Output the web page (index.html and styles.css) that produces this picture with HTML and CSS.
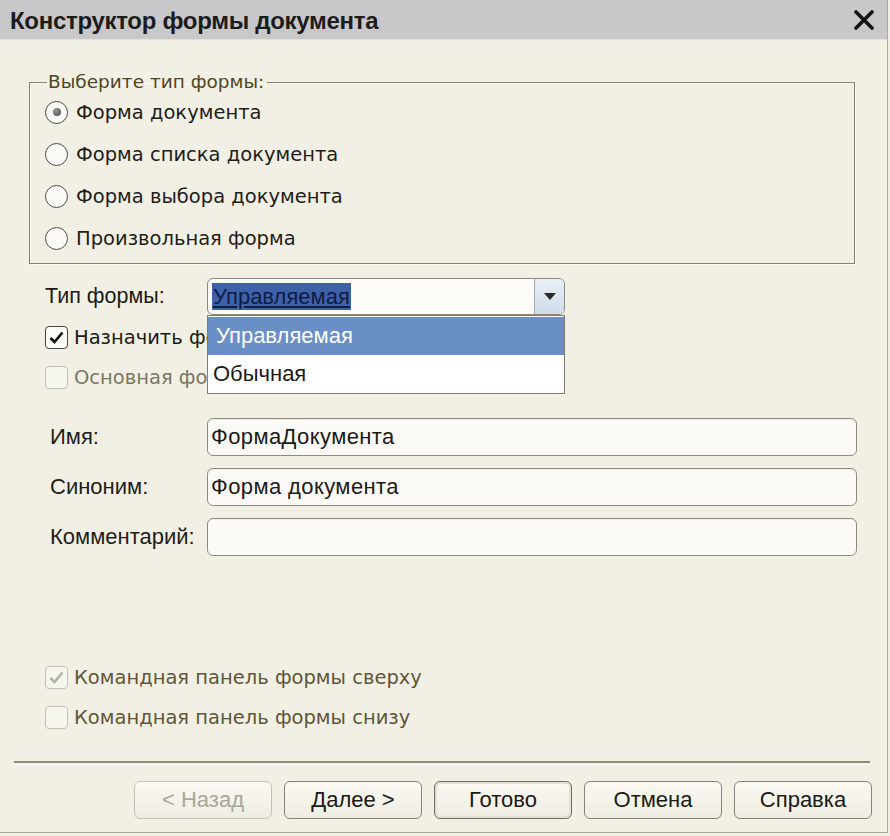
FILE: index.html
```html
<!DOCTYPE html>
<html lang="ru">
<head>
<meta charset="utf-8">
<title>Конструктор формы документа</title>
<link rel="stylesheet" href="styles.css">
</head>
<body>
<div class="window">
  <div class="titlebar">
    <span class="title">Конструктор формы документа</span>
    <svg class="close" width="20" height="20" viewBox="0 0 20 20"><path d="M2 2 L18 18 M18 2 L2 18" stroke="#111" stroke-width="3.6" stroke-linecap="round"/></svg>
  </div>
  <div class="content">
    <fieldset class="group">
      <legend>Выберите тип формы:</legend>
      <div class="radio-row first"><span class="radio checked"></span><span class="rlabel">Форма документа</span></div>
      <div class="radio-row"><span class="radio"></span><span class="rlabel">Форма списка документа</span></div>
      <div class="radio-row"><span class="radio"></span><span class="rlabel">Форма выбора документа</span></div>
      <div class="radio-row"><span class="radio"></span><span class="rlabel">Произвольная форма</span></div>
    </fieldset>

    <div class="type-row">
      <span class="type-label">Тип формы:</span>
      <div class="combo">
        <div class="combo-field"><span class="sel">Управляемая</span></div>
        <div class="combo-btn"><svg width="12" height="7" viewBox="0 0 12 7"><path d="M0 0 H12 L6 7 Z" fill="#2b2a25"/></svg></div>
        <div class="combo-list">
          <div class="opt active">Управляемая</div>
          <div class="opt">Обычная</div>
        </div>
      </div>
    </div>

    <div class="check-row"><span class="check on"><svg width="15" height="13" viewBox="0 0 15 13"><path d="M1.5 7 L5.5 11 L13.5 1.5" fill="none" stroke="#111" stroke-width="2.6"/></svg></span><span class="clabel clip">Назначить форму основной</span></div>
    <div class="check-row disabled"><span class="check"></span><span class="clabel clip">Основная форма документа</span></div>

    <div class="fields">
      <span class="flabel">Имя:</span><div class="input">ФормаДокумента</div>
      <span class="flabel">Синоним:</span><div class="input">Форма документа</div>
      <span class="flabel">Комментарий:</span><div class="input"></div>
    </div>

    <div class="bottom-checks">
      <div class="check-row muted"><span class="check dim"><svg width="15" height="13" viewBox="0 0 15 13"><path d="M1.5 7 L5.5 11 L13.5 1.5" fill="none" stroke="#b4b3ab" stroke-width="2.6"/></svg></span><span class="clabel">Командная панель формы сверху</span></div>
      <div class="check-row muted"><span class="check dim"></span><span class="clabel">Командная панель формы снизу</span></div>
    </div>
  </div>
  <div class="separator"></div>
  <div class="buttons">
    <div class="btn disabled">&lt; Назад</div>
    <div class="btn">Далее &gt;</div>
    <div class="btn default">Готово</div>
    <div class="btn">Отмена</div>
    <div class="btn">Справка</div>
  </div>
</div>
</body>
</html>
```

FILE: styles.css
```css
html, body {
  margin: 0;
  padding: 0;
  background: #f2f0e4;
}
body {
  font-family: "Liberation Sans", Arial, sans-serif;
  color: #1b1a16;
}
.window {
  width: 887px;
  height: 832px;
  background: #f2f0e4;
  border-right: 1px solid #a9a8a2;
  border-bottom: 1px solid #a9a8a2;
  display: flex;
  flex-direction: column;
  overflow: hidden;
}
.titlebar {
  height: 40px;
  flex: none;
  background: #c8c7c9;
  border-bottom: 1px solid #e2e1dc;
  box-sizing: border-box;
  display: flex;
  align-items: center;
  justify-content: space-between;
  padding: 0 13px 0 10px;
}
.title {
  font-weight: bold;
  font-size: 24px;
  color: #1c1c1c;
  letter-spacing: -0.3px;
  margin-top: 2px;
}
.close {
  display: block;
}
.content {
  flex: 1;
  display: flex;
  flex-direction: column;
}
.group {
  margin: 31px 0 0 29px;
  width: 826px;
  box-sizing: border-box;
  height: 193px;
  border: 1px solid #84826f;
  box-shadow: inset 1px 1px 0 #fbfaf3, 1px 1px 0 #fbfaf3;
  padding: 0 0 0 15px;
}
.group legend {
  font-family: "DejaVu Sans", Verdana, sans-serif;
  font-size: 18.5px;
  line-height: 22px;
  color: #4f4420;
  padding: 0 3px 0 1px;
  margin-left: 2px;
}
.radio-row {
  height: 42px;
  display: flex;
  align-items: center;
}
.radio-row.first {
  margin-top: -2px;
}
.radio {
  width: 23px;
  height: 23px;
  border: 1.5px solid #4a4a46;
  border-radius: 50%;
  background: #fbfaf6;
  box-sizing: border-box;
  display: flex;
  align-items: center;
  justify-content: center;
  margin-right: 8px;
  flex: none;
}
.radio.checked::after {
  content: "";
  width: 8px;
  height: 8px;
  border-radius: 50%;
  background: radial-gradient(circle at 35% 35%, #9a9a9a, #3f3f3f);
}
.rlabel {
  font-family: "DejaVu Sans", Verdana, sans-serif;
  font-size: 19.5px;
  color: #1e1d18;
}
.type-row {
  margin: 14px 0 0 45px;
  height: 37px;
  display: flex;
  align-items: center;
}
.type-label {
  width: 162px;
  font-size: 21.5px;
}
.combo {
  position: relative;
  width: 358px;
  height: 37px;
  display: flex;
  box-sizing: border-box;
  border: 1px solid #8c8a80;
  border-radius: 6px;
  background: #fcfbf8;
}
.combo-field {
  flex: 1;
  display: flex;
  align-items: center;
  padding-left: 4px;
}
.sel {
  background: #3e62a8;
  color: #0f1b45;
  font-size: 22px;
  text-decoration: underline;
  padding: 0 1px 0 1px;
  line-height: 27px;
}
.combo-btn {
  width: 29px;
  border-left: 1px solid #a3aab2;
  border-radius: 0 5px 5px 0;
  background: linear-gradient(#e8eff7, #cfdcea);
  display: flex;
  align-items: center;
  justify-content: center;
}
.combo-list {
  position: absolute;
  left: -1px;
  top: 36px;
  width: 358px;
  box-sizing: border-box;
  border: 1px solid #7d7b72;
  background: #ffffff;
  z-index: 2;
}
.opt {
  height: 38px;
  display: flex;
  align-items: center;
  padding-left: 8px;
  font-size: 22px;
  color: #1b1a16;
}
.opt + .opt {
  padding-left: 5px;
}
.opt.active {
  background: #6a8fc6;
  color: #ffffff;
  margin: 1px 0 0 0;
}
.check-row {
  height: 40px;
  display: flex;
  align-items: center;
  margin-left: 45px;
}
.type-row + .check-row {
  margin-top: 2px;
}
.check {
  width: 23px;
  height: 23px;
  box-sizing: border-box;
  border: 1.5px solid #46453f;
  border-radius: 4px;
  background: #fcfbf8;
  display: flex;
  align-items: center;
  justify-content: center;
  margin-right: 6px;
  flex: none;
}
.clabel {
  font-family: "DejaVu Sans", Verdana, sans-serif;
  font-size: 19.5px;
  white-space: nowrap;
}
.clabel.clip {
  width: 133px;
  overflow: hidden;
}
.check-row.disabled .check,
.check.dim {
  border-color: #c2c0b6;
  background: #f6f5ee;
}
.check-row.disabled .clabel {
  color: #7a7761;
}
.check-row.muted .clabel {
  color: #5e5638;
}
.fields {
  margin: 21px 0 0 50px;
  display: grid;
  grid-template-columns: 157px 650px;
  grid-auto-rows: 38px;
  row-gap: 12px;
  align-items: center;
}
.flabel {
  font-size: 22px;
  color: #1e1d18;
}
.input {
  height: 38px;
  box-sizing: border-box;
  border: 1px solid #8e8c80;
  border-radius: 6px;
  background: #fbfaf6;
  box-shadow: inset 0 1px 1px rgba(0,0,0,0.06);
  display: flex;
  align-items: center;
  padding-left: 3px;
  font-size: 22px;
  letter-spacing: 0.4px;
}
.bottom-checks {
  margin-top: 101px;
}
.separator {
  height: 1px;
  border-top: 2px solid #8f8d77;
  border-bottom: 1px solid #fbfaf3;
  margin: 0 17px 0 14px;
  flex: none;
}
.buttons {
  flex: none;
  height: 38px;
  margin: 16px 15px 13px 0;
  display: flex;
  justify-content: flex-end;
  gap: 12px;
}
.btn {
  width: 138px;
  height: 38px;
  box-sizing: border-box;
  border: 1px solid #86847a;
  border-radius: 6px;
  background: linear-gradient(#faf9f2, #efede2);
  display: flex;
  align-items: center;
  justify-content: center;
  font-size: 22px;
  color: #1b1a16;
}
.btn.disabled {
  color: #a9a79a;
  border-color: #c4c2b7;
}
.btn.default {
  border: 1px solid #6f6d63;
  box-shadow: inset 0 0 0 2px #e2e0d3;
}
```
